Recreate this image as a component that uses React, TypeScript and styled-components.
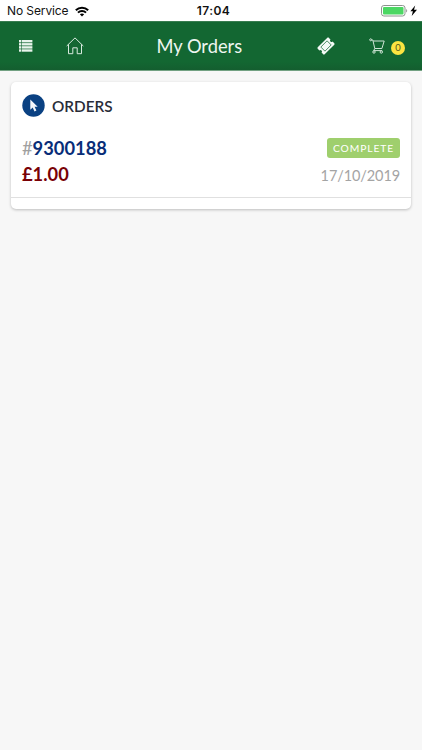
import React from "react";
import styled, { createGlobalStyle } from "styled-components";

const GlobalStyle = createGlobalStyle`
  * { box-sizing: border-box; }
  body { margin: 0; background: #f7f7f7; font-family: Lato, sans-serif; }
  svg { display: block; flex: none; }
`;

const Screen = styled.div`
  min-height: 750px;
  background: #f7f7f7;
`;

const StatusBar = styled.div`
  height: 21px;
  display: grid;
  grid-template-columns: 1fr auto 1fr;
  align-items: center;
  padding: 1px 4px 0 7px;
  background: #fff;
  color: #111;
  font: 400 12px/20px Inter, sans-serif;
`;

const Carrier = styled.div`
  display: flex;
  align-items: center;
  gap: 6px;
  letter-spacing: -0.1px;
`;

const Clock = styled.div`
  margin-left: 2px;
  font-weight: 600;
  font-size: 12px;
  letter-spacing: 0.45px;
`;

const Power = styled.div`
  display: flex;
  justify-content: flex-end;
`;

const NavBar = styled.header`
  height: 50px;
  display: grid;
  grid-template-columns: 138.5px auto 1fr;
  align-items: center;
  background: linear-gradient(#136732 0, #136732 40px, #145d2f 49px);
  border-top: 1px solid #387c50;
  border-bottom: 1px solid #72a182;
  padding: 0 17px 0 18px;
  color: #fff;
`;

const NavSide = styled.div<{ $end?: boolean }>`
  display: flex;
  align-items: center;
  justify-content: ${(p) => (p.$end ? "flex-end" : "flex-start")};
`;

const NavButton = styled.button<{ $gap?: number }>`
  display: flex;
  padding: 0;
  border: 0;
  background: none;
  color: inherit;
  margin-right: ${(p) => p.$gap ?? 0}px;
`;

const Title = styled.h1`
  margin: 0;
  font-size: 18.3px;
  line-height: 24px;
  font-weight: 400;
  color: #eef6f0;
`;

const CartCount = styled.span`
  width: 14px;
  height: 14px;
  margin-top: 3px;
  border-radius: 50%;
  background: #fbe441;
  color: #54571c;
  font-size: 9.5px;
  line-height: 14px;
  text-align: center;
`;

const Card = styled.section`
  margin: 11px 11px 0;
  height: 127px;
  background: #fff;
  border-radius: 5px;
  box-shadow: 0 1px 3px rgba(0, 0, 0, 0.24);
`;

const CardHeader = styled.div`
  display: flex;
  align-items: center;
  gap: 7px;
  height: 46px;
`;

const CardTitle = styled.h2`
  margin: 1px 0 0;
  font-size: 15.3px;
  line-height: 20px;
  font-weight: 600;
  color: #292c38;
`;

const CardBody = styled.div`
  height: 116px;
  padding: 0 11px;
  border-bottom: 1px solid #e0e0e0;
`;

const Order = styled.div`
  display: flex;
  justify-content: space-between;
  padding-top: 7px;
`;

const OrderColumn = styled.div<{ $end?: boolean }>`
  display: flex;
  flex-direction: column;
  align-items: ${(p) => (p.$end ? "flex-end" : "flex-start")};
  padding-top: ${(p) => (p.$end ? 3 : 0)}px;
`;

const OrderNumber = styled.div`
  font-size: 18.3px;
  line-height: 26px;
  font-weight: 700;
  color: #082d78;
`;

const Hash = styled.span`
  font-weight: 400;
  color: #a0a0a0;
`;

const Price = styled(OrderNumber)`
  color: #790005;
`;

const Status = styled.div`
  width: 73px;
  height: 20px;
  border-radius: 3px;
  background: #9fcf6d;
  color: #fff;
  font-size: 10.3px;
  line-height: 21px;
  letter-spacing: 0.9px;
  text-align: center;
`;

const OrderDate = styled.div`
  margin-top: 8px;
  font-size: 14.5px;
  line-height: 20px;
  letter-spacing: -0.1px;
  color: #a4a4a4;
`;

const WifiIcon = () => (
  <svg width="14" height="11" viewBox="0 0 15 11" fill="none" stroke="#000" strokeWidth="2.2">
    <path d="M.9 4.1C4.6.5 10.4.5 14.1 4.1" />
    <path d="M3.2 6.7c2.4-2.3 6.2-2.3 8.6 0" />
    <path d="M5.2 8.5c1.3-1.2 3.3-1.2 4.6 0L7.5 10.8Z" fill="#000" stroke="none" />
  </svg>
);

const BatteryIcon = () => (
  <svg width="37" height="12" viewBox="0 0 37 12">
    <rect x=".5" y=".5" width="23.5" height="10.5" rx="2.4" fill="#fff" stroke="#8c938d" />
    <rect x="2" y="2" width="20.5" height="7.5" rx="1" fill="#4bd763" />
    <path d="M25.2 4c1.3.6 1.3 2.8 0 3.4Z" fill="#8c938d" />
    <path d="M34.2.4 29.4 6.2h2.5L30.7 11 36 4.8H33Z" fill="#000" />
  </svg>
);

const ListIcon = () => (
  <svg width="15" height="14" viewBox="0 0 15 14" fill="#e9f4ec">
    {[1, 4.1, 7.2, 10.3].map((y) => (
      <React.Fragment key={y}>
        <rect x="1" y={y} width="2.4" height="2.4" />
        <rect x="4" y={y} width="10.4" height="2.4" />
      </React.Fragment>
    ))}
  </svg>
);

const HomeIcon = () => (
  <svg width="18" height="18" viewBox="0 0 18 18" fill="none" stroke="#d9eadf" strokeWidth="1">
    <path d="M.7 9 9 .9l8.3 8.1M2.5 7.4v9.3h4.3v-5.9h4.4v5.9h4.3V7.4" />
  </svg>
);

const TicketIcon = () => (
  <svg width="18" height="18" viewBox="0 0 18 18">
    <g transform="rotate(-45 9 9)">
      <path
        d="M2.2 4.1h13.6a1 1 0 0 1 1 1v2.4a1.5 1.5 0 0 0 0 3v2.4a1 1 0 0 1-1 1H2.2a1 1 0 0 1-1-1v-2.4a1.5 1.5 0 0 0 0-3V5.1a1 1 0 0 1 1-1Z"
        fill="#f4faf6"
      />
      <rect x="4.6" y="6.1" width="8.8" height="5.8" fill="none" stroke="#136732" strokeWidth=".7" />
    </g>
  </svg>
);

const CartIcon = () => (
  <svg width="16" height="16" viewBox="0 0 16 16" fill="none" stroke="#cfe4d6" strokeWidth="1">
    <circle cx="1.7" cy="1.8" r="1" />
    <path d="M2.7 2h1.1l2 8.5h7.1L15.2 3H4.1M5.8 10.5l-1.1 2.1h8.5" />
    <circle cx="5" cy="14" r="1.2" />
    <circle cx="12.3" cy="14" r="1.2" />
  </svg>
);

const PointerIcon = () => (
  <svg width="23" height="23" viewBox="0 0 23 23">
    <circle cx="11.5" cy="11.5" r="11.2" fill="#0a4182" />
    <path d="M8.3 5.5v10.2l2.4-2.2 1.8 4 1.9-.9-1.8-3.8h3.1Z" fill="#f4f7fb" />
  </svg>
);

export default function App() {
  return (
    <>
      <GlobalStyle />
      <Screen>
        <StatusBar>
          <Carrier>
            No Service
            <WifiIcon />
          </Carrier>
          <Clock>17:04</Clock>
          <Power>
            <BatteryIcon />
          </Power>
        </StatusBar>
        <NavBar>
          <NavSide>
            <NavButton $gap={33} aria-label="Menu">
              <ListIcon />
            </NavButton>
            <NavButton aria-label="Home">
              <HomeIcon />
            </NavButton>
          </NavSide>
          <Title>My Orders</Title>
          <NavSide $end>
            <NavButton $gap={34} aria-label="Tickets">
              <TicketIcon />
            </NavButton>
            <NavButton $gap={6} aria-label="Cart">
              <CartIcon />
            </NavButton>
            <CartCount>0</CartCount>
          </NavSide>
        </NavBar>
        <Card>
          <CardBody>
            <CardHeader>
              <PointerIcon />
              <CardTitle>ORDERS</CardTitle>
            </CardHeader>
            <Order>
              <OrderColumn>
                <OrderNumber>
                  <Hash>#</Hash>9300188
                </OrderNumber>
                <Price>£1.00</Price>
              </OrderColumn>
              <OrderColumn $end>
                <Status>COMPLETE</Status>
                <OrderDate>17/10/2019</OrderDate>
              </OrderColumn>
            </Order>
          </CardBody>
        </Card>
      </Screen>
    </>
  );
}
